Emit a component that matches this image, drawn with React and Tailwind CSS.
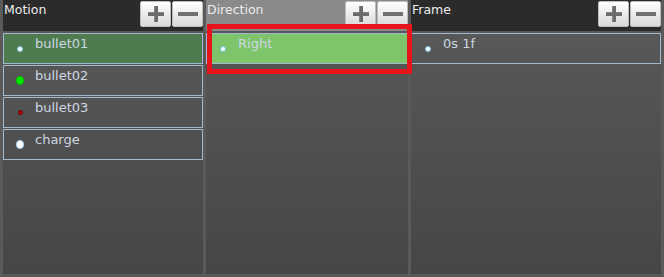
import React from "react";

function PlusBtn() {
  return (
    <div className="w-[31px] h-[26px] rounded-[2px] border border-[#bdbdbd] bg-gradient-to-b from-[#ffffff] to-[#d9d9d9] flex items-center justify-center">
      <svg width="16" height="16" viewBox="0 0 16 16">
        <rect x="6.2" y="0" width="3.8" height="16" fill="#6b6b6b" />
        <rect x="0" y="6.2" width="16" height="3.8" fill="#6b6b6b" />
      </svg>
    </div>
  );
}

function MinusBtn() {
  return (
    <div className="w-[31px] h-[26px] rounded-[2px] border border-[#bdbdbd] bg-gradient-to-b from-[#ffffff] to-[#d9d9d9] flex items-center justify-center">
      <svg width="20" height="6" viewBox="0 0 20 6">
        <rect x="0" y="1" width="20" height="4" fill="#707070" />
      </svg>
    </div>
  );
}

function Header({ title, light }) {
  return (
    <div
      className={
        "h-[31px] flex justify-between items-start pt-[1px] " +
        (light ? "bg-[#8a8a8a]" : "bg-[#2b2b2b]")
      }
    >
      <span className="pl-[1px] text-[12.5px] leading-[18px] text-[#ececec]">{title}</span>
      <div className="flex gap-[1px]">
        <PlusBtn />
        <MinusBtn />
      </div>
    </div>
  );
}

function Dot({ kind }) {
  if (kind === "green")
    return <div className="w-[9px] h-[9px] rounded-full bg-[#00e800] border border-[#00c000]" />;
  if (kind === "red")
    return <div className="w-[5px] h-[5px] rounded-full bg-[#c00000] border border-[#700000]" />;
  if (kind === "white")
    return <div className="w-[9px] h-[9px] rounded-full bg-[#ffffff] border border-[#a9d2f2]" />;
  return <div className="w-[6px] h-[6px] rounded-full bg-[#f2faff] border border-[#86c6ec]" />;
}

function Item({ label, dot, bg, dotOffset = "pl-[12px]" }) {
  return (
    <div
      className={
        "h-[31px] mb-[1px] border border-[#a3b9d2] flex items-start " + (bg || "")
      }
    >
      <div className={"w-[31px] h-full flex items-center " + dotOffset}>
        <div className="w-[8px] flex items-center justify-center">
          <Dot kind={dot} />
        </div>
      </div>
      <span className="pt-[1px] text-[13px] leading-[18px] text-[#cdd7e2]">{label}</span>
    </div>
  );
}

export default function App() {
  return (
    <div
      className="relative w-[664px] h-[277px] bg-[#5a5a5a] flex gap-[3px] px-[3px] pb-[3px]"
      style={{ fontFamily: '"DejaVu Sans", "Noto Sans", sans-serif' }}
    >
      <div className="w-[200px] flex flex-col">
        <Header title="Motion" />
        <div className="flex-1 bg-gradient-to-b from-[#585858] to-[#464646] pt-[2px]">
          <Item label="bullet01" dot="light" bg="bg-[#4e7c4f]" />
          <Item label="bullet02" dot="green" />
          <Item label="bullet03" dot="red" />
          <Item label="charge" dot="white" />
        </div>
      </div>
      <div className="w-[202px] flex flex-col">
        <Header title="Direction" light />
        <div className="flex-1 bg-gradient-to-b from-[#585858] to-[#464646] pt-[2px]">
          <Item label="Right" dot="light" bg="bg-[#7ec46b]" />
        </div>
      </div>
      <div className="flex-1 flex flex-col">
        <Header title="Frame" />
        <div className="flex-1 bg-gradient-to-b from-[#585858] to-[#464646] pt-[2px]">
          <Item label="0s 1f" dot="light" />
        </div>
      </div>
      <div className="absolute left-[207px] top-[24px] w-[205px] h-[50px] border-[5px] border-[#e8141c]" />
    </div>
  );
}
